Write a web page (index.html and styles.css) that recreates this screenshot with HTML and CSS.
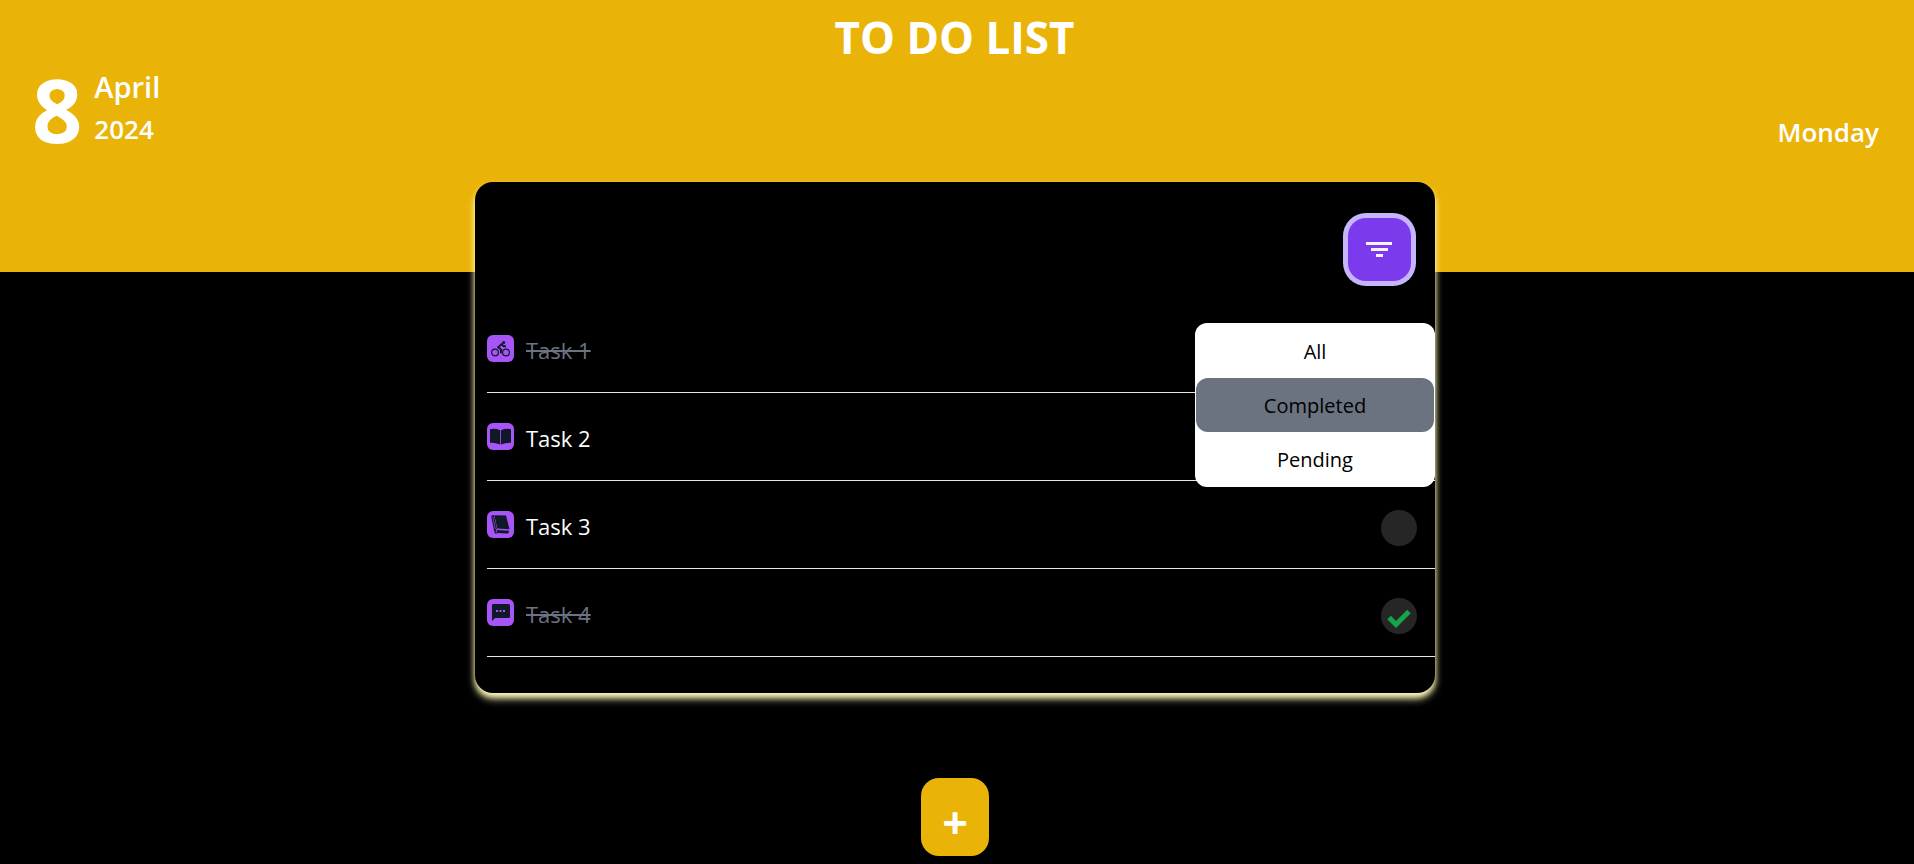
FILE: index.html
```html
<!DOCTYPE html>
<html lang="en">
<head>
<meta charset="utf-8">
<title>To Do List</title>
<link rel="stylesheet" href="styles.css">
</head>
<body>
<header class="header">
  <h1 class="title">TO DO LIST</h1>
  <div class="date-row">
    <div class="date">
      <span class="day">8</span>
      <div class="month-year">
        <span class="month">April</span>
        <span class="year">2024</span>
      </div>
    </div>
    <span class="weekday">Monday</span>
  </div>
</header>
<main class="main">
  <section class="card">
    <div class="toolbar">
      <button class="filter" type="button" aria-label="Filter tasks" aria-expanded="true">
        <svg class="filter-icon" viewBox="0 0 27 16" aria-hidden="true"><path d="M0 0h26v3H0zM5 6h17v3H5zM10 12h7v3h-7z" fill="#f5f3ff"/></svg>
      </button>
      <div class="menu">
        <button class="menu-item" type="button">All</button>
        <button class="menu-item menu-item-active" type="button">Completed</button>
        <button class="menu-item" type="button">Pending</button>
      </div>
    </div>
    <ul class="tasks">
      <li class="task task-done">
        <span class="badge"><svg viewBox="0 0 27 27" aria-hidden="true"><g fill="none" stroke="#111827"><circle cx="8" cy="17.500" r="3.400" stroke-width="1.200"/><circle cx="19" cy="17.500" r="3.400" stroke-width="1.200"/><path d="M14 18.200v-3.700l-2.800-2.200 3.400-3.200 2 2.200h2.400" stroke-width="1.900"/></g><circle cx="16.700" cy="7.400" r="1.500" fill="#111827"/></svg></span>
        <label class="task-name" for="t1">Task 1</label>
        <input class="check" id="t1" type="checkbox" checked>
      </li>
      <li class="task">
        <span class="badge"><svg viewBox="0 0 27 27" aria-hidden="true"><path d="M3 6.300Q8 5 13.100 7.300V21.500Q8 19.400 3 19.800zM24 6.300Q19 5 13.900 7.300V21.500Q19 19.400 24 19.800z" fill="#111827"/></svg></span>
        <label class="task-name" for="t2">Task 2</label>
        <input class="check" id="t2" type="checkbox">
      </li>
      <li class="task">
        <span class="badge"><svg viewBox="0 0 27 27" aria-hidden="true"><path d="M7.300 4.200 19 4.600 22.500 18.300 10.300 17.600z" fill="#111827"/><path d="M6.300 4.500Q4.600 4.700 4.900 6.300L7.700 19.500Q8 22.300 9.600 22.300M6.300 4.500 9.300 18.200Q7.900 18.600 8.600 20.500" fill="none" stroke="#111827" stroke-width="1.200"/><path d="M9.800 18.800 22.300 19.300 21.200 22.600 9.600 22z" fill="#111827"/><path d="M9 18.600 22 19.500" stroke="#a855f7" stroke-width=".6"/></svg></span>
        <label class="task-name" for="t3">Task 3</label>
        <input class="check" id="t3" type="checkbox">
      </li>
      <li class="task task-done">
        <span class="badge"><svg viewBox="0 0 27 27" aria-hidden="true"><path d="M6 5h15.500Q23 5 23 6.500V17.500Q23 19 21.500 19H8L5 22V6.200Q5 5 6 5z" fill="#111827"/><path d="M9 11h2v2H9zM12.500 11h2v2h-2zM16 11h2v2h-2z" fill="#a855f7"/></svg></span>
        <label class="task-name" for="t4">Task 4</label>
        <input class="check" id="t4" type="checkbox" checked>
        <svg class="tick" viewBox="0 0 36 36" aria-hidden="true"><path d="M8 20.500l7 7L28 14.500" fill="none" stroke="#16a34a" stroke-width="5"/></svg>
      </li>
    </ul>
  </section>
  <button class="add" type="button" aria-label="Add task">+</button>
</main>
</body>
</html>
```
FILE: styles.css
```css
* { box-sizing: border-box; }

body {
  margin: 0;
  background: #000;
  color: #fff;
  font-family: "Open Sans", "Noto Sans", sans-serif;
}

button {
  font-family: inherit;
  border: 0;
  padding: 0;
  cursor: pointer;
}

.header {
  background: #eab308;
  padding: 7px 35px 120px 32px;
}

.title {
  margin: 0;
  padding-right: 2px;
  font-size: 44px;
  line-height: 60px;
  font-weight: 700;
  text-align: center;
}

.date-row {
  display: flex;
  justify-content: space-between;
  align-items: flex-end;
  height: 85px;
}

.date {
  display: flex;
  align-items: flex-start;
  gap: 12px;
}

.day {
  font-size: 88px;
  line-height: 86px;
  font-weight: 700;
}

.month-year {
  display: flex;
  flex-direction: column;
  font-weight: 600;
}

.month { font-size: 29px; line-height: 42px; }
.year { font-size: 26px; line-height: 42px; }

.weekday {
  font-size: 26px;
  line-height: 40px;
  font-weight: 600;
}

.main {
  display: flex;
  flex-direction: column;
  align-items: center;
  gap: 85px;
  margin-top: -90px;
  padding: 0 4px 8px 0;
}

.card {
  width: 100%;
  max-width: 960px;
  padding-bottom: 36px;
  background: #000;
  border-radius: 18px;
  box-shadow: 0 6px 9px -1px #fef9c3, 0 3px 6px -1px #fef08a;
}

.toolbar {
  position: relative;
  display: flex;
  justify-content: flex-end;
  padding: 36px 24px 24px 0;
}

.filter {
  display: grid;
  place-items: center;
  width: 63px;
  height: 63px;
  border-radius: 18px;
  background: #7c3aed;
  box-shadow: 0 0 0 5px #c4b5fd;
}

.filter-icon { width: 27px; height: 16px; }

.menu {
  position: absolute;
  top: 141px;
  right: 0;
  z-index: 1;
  width: 240px;
  padding: 1px;
  border-radius: 12px;
  background: #fff;
}

.menu-item {
  display: block;
  width: 100%;
  padding-top: 2px;
  border-radius: 12px;
  background: transparent;
  color: #000;
  font-size: 20px;
  line-height: 52px;
}

.menu-item-active { background: #6b7280; }

.tasks {
  margin: 0;
  padding: 0 0 0 12px;
  list-style: none;
}

.task {
  position: relative;
  display: flex;
  align-items: center;
  gap: 12px;
  height: 88px;
  padding-right: 18px;
  border-bottom: 1px solid #e5e7eb;
}

.badge {
  width: 27px;
  height: 27px;
  border-radius: 6px;
  background: #a855f7;
}

.badge svg { display: block; }

.task-name {
  flex: 1;
  padding-top: 2px;
  font-size: 22px;
  line-height: 36px;
}

.task-done .task-name {
  color: #6b7280;
  text-decoration: line-through 2px;
}

.check {
  appearance: none;
  width: 36px;
  height: 36px;
  margin: 6px 0 0;
  border-radius: 50%;
  background: #262626;
}

.tick {
  position: absolute;
  right: 18px;
  bottom: 23px;
  width: 36px;
  height: 36px;
  pointer-events: none;
}

.add {
  width: 68px;
  height: 78px;
  padding-top: 9px;
  border-radius: 18px;
  background: #eab308;
  color: #fff;
  font-size: 45px;
  line-height: 60px;
  font-weight: 700;
}
```
